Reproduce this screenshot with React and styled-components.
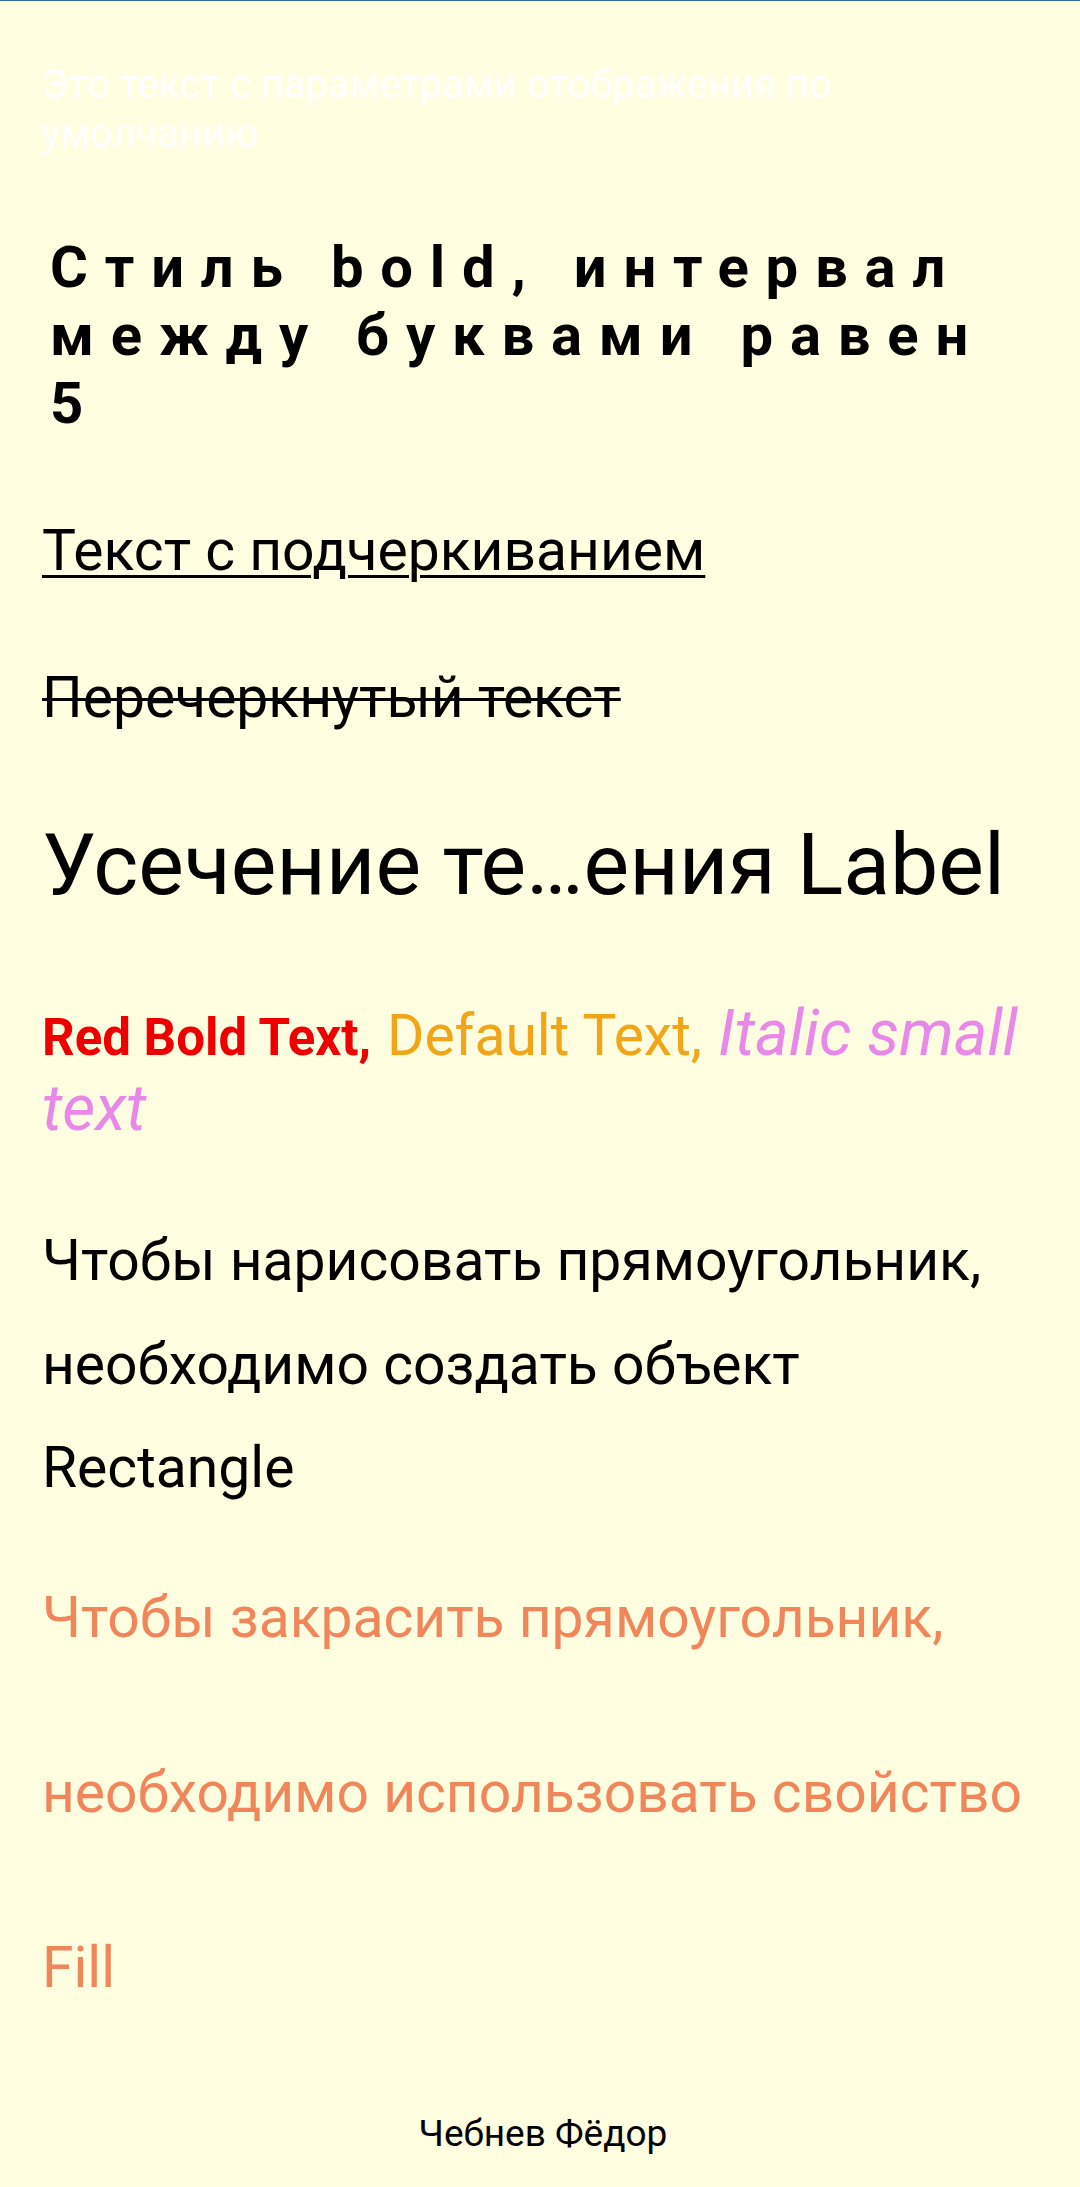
import React from 'react';
import styled, { createGlobalStyle } from 'styled-components';

const GlobalStyle = createGlobalStyle`
  html, body {
    margin: 0;
    padding: 0;
    background: #fffee0;
  }
  body {
    font-family: Roboto, "Noto Sans", "Liberation Sans", sans-serif;
  }
`;

const Page = styled.main`
  box-sizing: border-box;
  min-height: 2187px;
  display: flex;
  flex-direction: column;
  background: #fffee0;
  border-top: 1px solid #3b6c9e;
  padding: 0 36px 31px 42px;
`;

const Text = styled.p`
  margin: ${(p) => p.$mt}px 0 0;
  font-size: ${(p) => p.$size}px;
  line-height: ${(p) => p.$lh}px;
  color: ${(p) => p.$color || '#000'};
  font-weight: 400;
`;

const DefaultText = styled(Text)`
  color: #ffffff;
`;

const SpacedTitle = styled(Text)`
  font-weight: 700;
  letter-spacing: 16.8px;
  padding-left: 8px;
`;

const UnderlinedText = styled(Text)`
  text-decoration: underline;
  text-decoration-thickness: 3px;
  text-underline-offset: 5px;
`;

const StruckText = styled(Text)`
  text-decoration: line-through;
  text-decoration-thickness: 3px;
`;

const TruncatedText = styled(Text)`
  white-space: nowrap;
  overflow: hidden;
`;

const Run = styled.span`
  line-height: 1;
  font-size: ${(p) => p.$size}px;
  color: ${(p) => p.$color};
  font-weight: ${(p) => (p.$bold ? 700 : 400)};
  font-style: ${(p) => (p.$italic ? 'italic' : 'normal')};
`;

const Footer = styled.footer`
  margin-top: auto;
  text-align: center;
  font-size: 37px;
  line-height: 44px;
  color: #000;
`;

export default function App() {
  return (
    <>
      <GlobalStyle />
      <Page>
        <DefaultText $mt={59} $size={40} $lh={49}>
          Это текст с параметрами отображения по умолчанию
        </DefaultText>
        <SpacedTitle $mt={75} $size={58} $lh={68}>
          Стиль bold, интервал между буквами равен 5
        </SpacedTitle>
        <UnderlinedText $mt={80} $size={57} $lh={67}>
          Текст с подчеркиванием
        </UnderlinedText>
        <StruckText $mt={80} $size={57} $lh={67}>
          Перечеркнутый текст
        </StruckText>
        <TruncatedText $mt={83} $size={86} $lh={102}>
          Усечение те…ения Label
        </TruncatedText>
        <Text $mt={80} $size={64} $lh={75}>
          <Run $size={51} $color="#ee0000" $bold>Red Bold Text,</Run>{' '}
          <Run $size={57} $color="#f2a516">Default Text,</Run>{' '}
          <Run $size={64} $color="#ea88ea" $italic>Italic small text</Run>
        </Text>
        <Text $mt={63} $size={57} $lh={103.5}>
          Чтобы нарисовать прямоугольник, необходимо создать объект Rectangle
        </Text>
        <Text $mt={10} $size={57} $lh={175} $color="#f0865a">
          Чтобы закрасить прямоугольник, необходимо использовать свойство Fill
        </Text>
        <Footer>Чебнев Фёдор</Footer>
      </Page>
    </>
  );
}
